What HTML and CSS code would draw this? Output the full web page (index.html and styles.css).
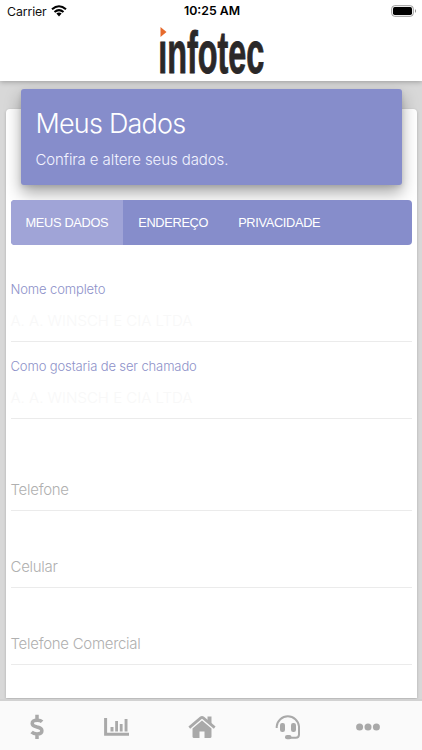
FILE: index.html
```html
<!DOCTYPE html>
<html lang="pt-BR">
<head>
<meta charset="utf-8">
<title>Meus Dados</title>
<link rel="stylesheet" href="styles.css">
</head>
<body>
<div class="app">
  <header class="header">
    <div class="status">
      <div class="carrier"><span>Carrier</span>
        <svg width="16" height="12" viewBox="0 0 16 12"><g fill="none" stroke="#000" stroke-width="2.1"><path d="M1 4.3Q8-1.8 15 4.3"/><path d="M3.5 7Q8 3.2 12.5 7"/></g><path d="M5.4 8.6Q8 6.6 10.6 8.6L8 11.4Z"/></svg>
      </div>
      <div class="time">10:25 AM</div>
      <svg class="battery" width="26" height="12" viewBox="0 0 26 12"><rect x=".7" y=".7" width="21.6" height="10.6" rx="3" fill="#fff" stroke="#999"/><rect x="2" y="2" width="19" height="8" rx="1.7"/><path d="M24 4Q26 6 24 8Z" fill="#888"/></svg>
    </div>
    <svg class="logo" width="112" height="56" viewBox="0 0 112 56">
      <text class="wordmark" transform="translate(1.2 50.7) scale(.525 1)" x="0" y="0" textLength="202" lengthAdjust="spacingAndGlyphs">infotec</text>
      <path d="M0 0H10V17H0Z" fill="#fff"/>
      <path d="M3.5 5L9.5 10L3.5 15Z" fill="#e66a2c"/>
    </svg>
  </header>
  <main class="content">
    <section class="card">
      <div class="banner"><h1>Meus Dados</h1><p>Confira e altere seus dados.</p></div>
      <nav class="tabs"><a class="tab active">MEUS DADOS</a><a class="tab">ENDEREÇO</a><a class="tab">PRIVACIDADE</a></nav>
      <form class="fields">
        <div class="field filled"><label>Nome completo</label><div class="value">A. A. WINSCH E CIA LTDA</div></div>
        <div class="field filled"><label>Como gostaria de ser chamado</label><div class="value">A. A. WINSCH E CIA LTDA</div></div>
        <div class="field phone"><label>Telefone</label></div>
        <div class="field"><label>Celular</label></div>
        <div class="field"><label>Telefone Comercial</label></div>
      </form>
    </section>
  </main>
  <footer class="nav">
    <svg class="dollar" width="14" height="26" viewBox="0 0 14 26"><path d="M12.1 7.8Q10.6 6.2 7.4 6.2C4.2 6.2 2.2 7.4 2.2 9.4C2.2 11.5 4 12.2 7 13C10.2 13.7 11.9 14.5 11.9 16.8C11.9 18.8 10 20 7 20Q3.5 20 1.6 18.1M7 .8V6M7 20V25" fill="none" stroke="#a9a9a9" stroke-width="3.5"/></svg>
    <svg class="chart" width="26" height="20" viewBox="0 0 26 20"><path d="M1.6 1V17.2H25" fill="none" stroke="#a9a9a9" stroke-width="3"/><path d="M6.5 10H9.5V14.5H6.5ZM11.2 4H14V14.5H11.2ZM15.8 7H18.6V14.5H15.8ZM20.6 2H23.5V14.5H20.6Z" fill="#a9a9a9"/></svg>
    <svg class="home" width="28" height="24" viewBox="0 0 28 24"><path d="M1.3 12.6L12.8 2.9Q14 1.9 15.2 2.9L26.7 12.6" fill="none" stroke="#a9a9a9" stroke-width="2.7"/><path d="M19.5 1.5H23.5V10L19.5 6.6ZM4.5 13.4L14 5.6L23.5 13.4V21.5Q23.5 23 22 23H16.5V16.5H11.5V23H6Q4.5 23 4.5 21.5Z" fill="#a9a9a9"/></svg>
    <svg class="support" width="26" height="26" viewBox="0 0 26 26"><path d="M1.7 14V12.5A11.2 11.2 0 0 1 24 12.5V20.5Q24 23.7 20.8 23.7H13" fill="none" stroke="#a9a9a9" stroke-width="2"/><rect x="5" y="9" width="5" height="9" rx="2.2" fill="#a9a9a9"/><rect x="16" y="9" width="5" height="9" rx="2.2" fill="#a9a9a9"/><rect x="10" y="21" width="6.5" height="4.3" rx="2.1" fill="#a9a9a9"/></svg>
    <svg class="more" width="24" height="8" viewBox="0 0 24 8" fill="#a9a9a9"><circle cx="3.6" cy="4" r="3.5"/><circle cx="12" cy="4" r="3.5"/><circle cx="20.4" cy="4" r="3.5"/></svg>
  </footer>
</div>
</body>
</html>
```
FILE: styles.css
```css
* { box-sizing: border-box; }
body { margin: 0; background: #d8d8d8; font-family: Inter, "Liberation Sans", sans-serif; }
.app { height: 750px; display: flex; flex-direction: column; overflow: hidden; }
.header { height: 81px; flex: none; background: #fff; box-shadow: 0 1px 5px rgba(0,0,0,.28); position: relative; z-index: 2; }
.status { height: 22px; display: grid; grid-template-columns: 1fr auto 1fr; align-items: center; padding: 0 5px 0 7px; font-size: 12.3px; color: #111; }
.carrier { display: flex; align-items: center; gap: 4px; letter-spacing: -.1px; }
.time { font-weight: 600; color: #000; font-size: 12.3px; line-height: 14px; }
.battery { justify-self: end; }
.logo { display: block; margin: 0 0 0 157px; overflow: visible; }
.wordmark { font: 700 60px "Liberation Sans", sans-serif; fill: #2b2828; stroke: #2b2828; stroke-width: 1px; }
.content { flex: 1; min-height: 0; padding: 28px 5.5px 0; overflow: hidden; }
.card { height: 589px; background: #fff; border-radius: 4px 4px 0 0; padding: 0 5px; box-shadow: 0 1px 3px rgba(0,0,0,.2); display: flow-root; }
.banner { height: 96px; margin: -20px 10px 15px; padding: 17px 15px; background: #868dcb; color: #fff; border-radius: 3px; box-shadow: 0 8px 16px rgba(0,0,0,.34), 0 2px 4px rgba(0,0,0,.1); }
.banner h1 { margin: 0; font-weight: 300; font-size: 27px; line-height: 36px; letter-spacing: -.8px; white-space: nowrap; }
.banner p { margin: 8px 0 0; font-weight: 300; font-size: 15px; line-height: 20px; letter-spacing: -.1px; color: #f2f3ff; }
.tabs { height: 45px; background: #868dcb; border-radius: 4px; display: flex; overflow: hidden; }
.tab { padding: 0 15px; color: #fff; font: 12.8px/45px "Liberation Sans", sans-serif; letter-spacing: -.33px; white-space: nowrap; }
.active { background: #a0a4d7; }
.fields { padding-top: 20px; }
.field { height: 77px; border-bottom: 1px solid #ebebeb; padding-top: 46px; color: #b0b0b0; font-weight: 300; font-size: 15px; line-height: 20px; letter-spacing: -.28px; }
.field label { display: block; }
.filled { padding-top: 14px; color: #8d91c9; font-size: 13px; letter-spacing: -.12px; }
.value { margin-top: 12px; font-size: 15px; letter-spacing: 0; color: #f8f8f8; }
.phone { height: 92px; padding-top: 61px; }
.nav { height: 51px; flex: none; background: #fafafa; border-top: 2px solid #d2d2d2; position: relative; display: flex; align-items: center; padding: 3px 0 0 30px; }
.chart { margin-left: 60px; }
.home { margin-left: 58px; }
.support { margin-left: 59px; }
.more { margin-left: 55px; }
```
